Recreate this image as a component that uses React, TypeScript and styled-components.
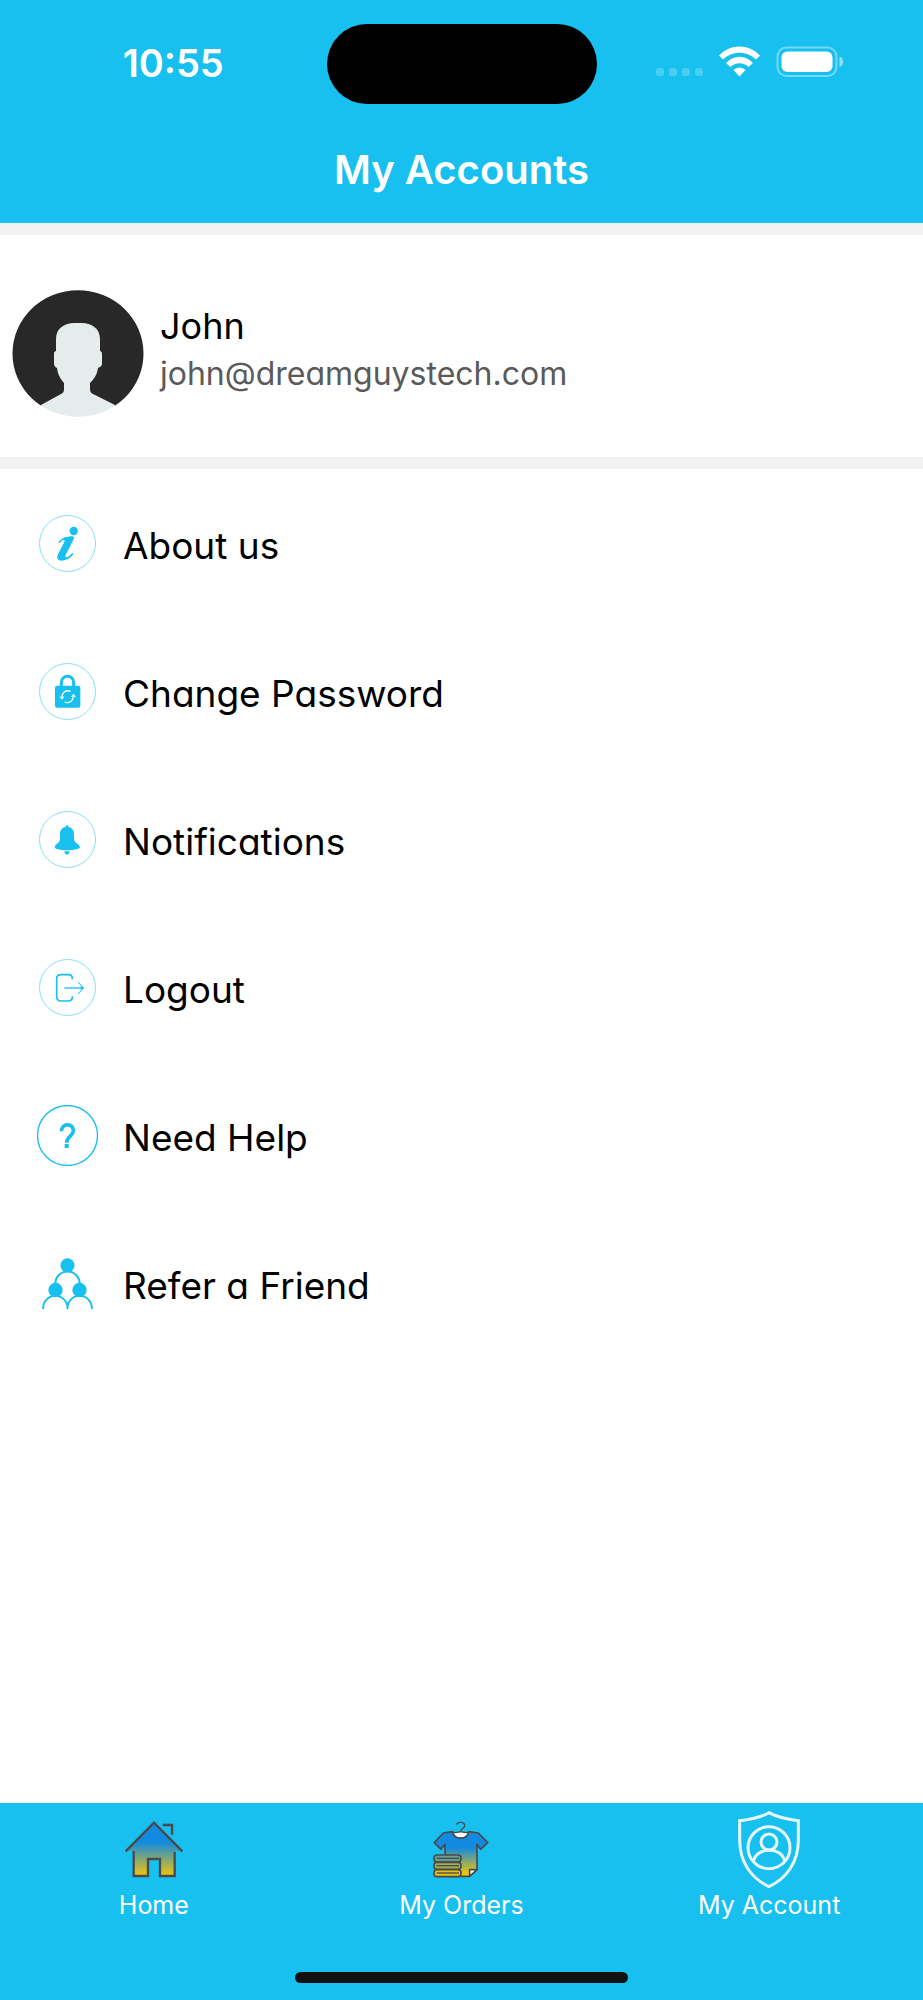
import React from "react";
import styled, { createGlobalStyle } from "styled-components";

const BLUE = "#17c0ee";
const INK = "#4a4a4a";

const GlobalStyle = createGlobalStyle`
  * { box-sizing: border-box; }
  body { margin: 0; background: #ffffff; }
`;

const Page = styled.div`
  display: flex;
  flex-direction: column;
  min-height: 100vh;
  font-family: Inter, "Liberation Sans", sans-serif;
  color: #000000;
`;

const Header = styled.header`
  padding: 24px 0 28px;
  background: ${BLUE};
  color: #ffffff;
`;

const StatusBar = styled.div`
  display: grid;
  grid-template-columns: 1fr 270px 1fr;
  align-items: center;
`;

const Clock = styled.time`
  padding: 0 0 2px 20px;
  text-align: center;
  font-size: 38px;
  line-height: 48px;
  font-weight: 600;
`;

const Island = styled.div`
  height: 80px;
  border-radius: 40px;
  background: #000000;
`;

const StatusIcons = styled.div`
  display: flex;
  justify-content: center;
  padding: 0 18px 4px 0;
`;

const Title = styled.h1`
  margin: 41px 0 0;
  text-align: center;
  font-size: 40px;
  line-height: 50px;
  font-weight: 600;
`;

const Profile = styled.section`
  display: flex;
  gap: 16px;
  padding: 55px 12px 40px;
  border: solid #f2f2f2;
  border-width: 12px 0;
  font-feature-settings: "cv11";
`;

const ProfileText = styled.div`
  padding-top: 12px;
`;

const Name = styled.h2`
  margin: 0;
  font-size: 36px;
  line-height: 48px;
  font-weight: 400;
`;

const Email = styled.p`
  margin: 0;
  font-size: 32px;
  line-height: 48px;
  color: #5a5a5a;
`;

const Menu = styled.ul`
  flex: 1;
  margin: 0;
  padding: 0;
  list-style: none;
`;

const MenuButton = styled.button`
  display: flex;
  align-items: center;
  gap: 20px;
  width: 100%;
  height: 148px;
  padding: 0 32px;
  border: 0;
  background: none;
  color: inherit;
  font-family: inherit;
  font-size: 37px;
  line-height: 48px;
  font-feature-settings: "cv11";
  text-align: left;
  cursor: pointer;
`;

const IconSlot = styled.span`
  display: flex;
  align-items: center;
  justify-content: center;
  width: 71px;
  height: 72px;
`;

const MenuLabel = styled.span`
  padding-top: 6px;
`;

const TabBar = styled.nav`
  background: ${BLUE};
  padding: 8px 0 17px;
`;

const Tabs = styled.div`
  display: grid;
  grid-template-columns: repeat(3, 1fr);
`;

const Tab = styled.a`
  display: flex;
  flex-direction: column;
  align-items: center;
  gap: 3px;
  color: #ffffff;
  text-decoration: none;
  font-size: 25px;
  line-height: 30px;
  font-weight: 400;
`;

const TabIcon = styled.span`
  display: flex;
  align-items: center;
  justify-content: center;
  height: 76px;
`;

const HomeIndicator = styled.div`
  width: 36%;
  height: 11px;
  margin: 52px auto 0;
  border-radius: 6px;
  background: #111111;
`;

const StatusGlyphs = () => (
  <svg width="190" height="32" viewBox="0 0 190 32" fill="#ffffff" aria-hidden="true">
    <g opacity="0.22">
      {[0, 13, 26, 39].map((x) => (
        <rect key={x} x={x} y="22" width="8" height="8" rx="2.5" />
      ))}
    </g>
    <path d="M63 9.5 C74.500 -2.500 92.500 -2.500 104 9.500 L100 13.500 C91 4.500 76 4.500 67 13.500 Z" />
    <path d="M70 17 C78 8.500 89 8.500 97 17 L92.500 21 C87.500 16 79.500 16 74.500 21 Z" />
    <path d="M77.500 24 C81 20.500 86 20.500 89.500 24 L83.500 30.500 Z" />
    <rect x="121.500" y="1.500" width="59" height="28.500" rx="9" fill="none" stroke="#ffffff" strokeOpacity="0.4" strokeWidth="2" />
    <rect x="125.500" y="5.500" width="51" height="20.500" rx="6" />
    <path d="M183.500 10.500 C188.500 12 188.500 19.500 183.500 21 Z" opacity="0.5" />
  </svg>
);

const Avatar = () => (
  <svg width="132" height="127" viewBox="0 0 132 127" role="img" aria-label="Profile photo">
    <defs>
      <clipPath id="avatar">
        <ellipse cx="66" cy="63.500" rx="65.500" ry="63.300" />
      </clipPath>
    </defs>
    <g clipPath="url(#avatar)">
      <path fill="#282828" d="M0 0 H132 V116 H0 Z" />
      <path
        fill="#e6ecec"
        d="M44 61 V49 C44 38 53 33 62 33 H70 C79 33 88 38 88 49 V61 C90 62 90 62 90 65 V74 C90 76 88 77 86 78 C85 85 82 89 78 93 V99 C78 102 79 103 81 104 L104 115.500 V127 H28 V115.500 L49 104 C51 103 52 102 52 99 V93 C48 88 46 85 45 78 C43 77 42 76 42 73 V65 C42 62 42 62 44 61 Z"
      />
    </g>
  </svg>
);

const Ring = ({ cy }: { cy: number }) => (
  <circle cx="142.500" cy={cy} r="84" fill="none" stroke="#8adff7" strokeWidth="3" />
);

const InfoIcon = () => (
  <svg width="57" height="57" viewBox="57 75 171 171" fill={BLUE} aria-hidden="true">
    <Ring cy={160.5} />
    <circle cx="161" cy="123" r="12.500" />
    <path d="M115 158 C123 145 137 139 159 139 C163 141 162 146 160 150 L137 195 C135 201 138 203 142 201 C149 198 153 193 157 189 C160 189 160 192 158 195 C149 206 136 212 122 212 C111 211 110 203 114 193 L133 156 C135 149 132 148 127 151 C123 154 121 158 118 160 Z" />
  </svg>
);

const LockIcon = () => (
  <svg width="57" height="57" viewBox="57 519 171 171" fill={BLUE} aria-hidden="true">
    <Ring cy={604.5} />
    <path d="M124 592 V577 a18.500 18.500 0 0 1 37 0 V592" fill="none" stroke={BLUE} strokeWidth="9" />
    <rect x="105" y="587" width="76" height="66" rx="6" />
    <path d="M126 621 C126 608 138 598 152 604 M160 619 C160 632 148 642 134 636" fill="none" stroke="#ffffff" strokeWidth="4" />
    <path d="M118 620 H133 L126 629 Z M153 620 H168 L160 611 Z" fill="#ffffff" />
  </svg>
);

const BellIcon = () => (
  <svg width="57" height="57" viewBox="57 62 171 171" fill={BLUE} aria-hidden="true">
    <Ring cy={147.5} />
    <path d="M137 110 V108 C137 104 145 104 145 108 V110 C156 112 162 120 162 131 V146 C162 156 173 159 179 167 C181 171 179 174 175 175 C153 181 130 181 109 175 C104 174 103 171 105 167 C110 159 120 156 120 146 V131 C120 120 126 112 137 110 Z" />
    <path d="M133 183 H149 C148 189 146 193 141 193 C136 193 134 189 133 183 Z" />
  </svg>
);

const LogoutIcon = () => (
  <svg width="57" height="57" viewBox="57 506 171 171" fill="none" stroke={BLUE} strokeWidth="4" aria-hidden="true">
    <Ring cy={591.5} />
    <path d="M157 567 V565 C157 557 153 553 145 553 H124 C115 553 110 557 110 565 V620 C110 628 115 632 124 632 H145 C153 632 157 628 157 620 V618" strokeWidth="5" />
    <path d="M133 593 H190" />
    <path d="M174 575 L190 593 L174 611" strokeWidth="3" />
    <path d="M182 587 L192 593 L182 599 Z" fill={BLUE} stroke="none" />
  </svg>
);

const HelpIcon = () => (
  <svg width="61" height="61" viewBox="54 45 183 183" fill="none" stroke={BLUE} aria-hidden="true">
    <circle cx="145.500" cy="136.500" r="90" strokeWidth="4" />
    <path d="M127.500 124 C127 99 163 98 163 122 C163 138 143 139 143 158" strokeWidth="11" />
    <rect x="137" y="162" width="12" height="12" fill={BLUE} stroke="none" />
  </svg>
);

const ReferIcon = () => (
  <svg width="51" height="51" viewBox="68 501 152 153" fill={BLUE} aria-hidden="true">
    <g fill="none" stroke={BLUE} strokeWidth="6">
      <path d="M107.500 578 A36.500 36.500 0 0 1 180.500 578" />
      <path d="M71 654 V651 A36.500 36.500 0 0 1 144 651 V654 M144 654 V651 A36.500 36.500 0 0 1 217 651 V654" />
    </g>
    <circle cx="144" cy="523" r="21" />
    <circle cx="108" cy="597" r="21.500" />
    <circle cx="180" cy="597" r="21.500" />
  </svg>
);

const Fade = ({ id, from, to }: { id: string; from: number; to: number }) => (
  <linearGradient id={id} gradientUnits="userSpaceOnUse" x1="0" x2="0" y1={from} y2={to}>
    <stop offset="0" stopColor="#118adf" />
    <stop offset="1" stopColor="#efc50c" />
  </linearGradient>
);

const HomeIcon = () => (
  <svg width="58" height="57" viewBox="75 92 174 171" fill="none" stroke={INK} strokeWidth="7" aria-hidden="true">
    <defs><Fade id="house" from={155} to={255} /></defs>
    <path d="M162 97 L245 182 H224 V257 H180 V206 H144 V257 H102 V182 H78 Z" fill="url(#house)" stroke="none" />
    <path d="M77 183 L162 97 L247 183" />
    <path d="M101 182 V257 H144 V206 H180 V257 H224 V184" />
    <path d="M188 104 H216 V133" />
  </svg>
);

const OrdersIcon = () => (
  <svg width="56" height="57" viewBox="159 92 168 171" fill="none" stroke={INK} strokeWidth="5" strokeLinejoin="round" aria-hidden="true">
    <defs><Fade id="shirt" from={172} to={250} /></defs>
    <path d="M217 124 L190 128 L163 157 L183 177 L195 162 V258 H268 L291 238 V162 L302 177 L323 157 L295 128 L267 124 C262 150 222 150 217 124 Z" fill="url(#shirt)" />
    <path d="M218 125 C226 129 232 126 242 124 C252 126 258 129 266 125 C261 149 223 149 218 125 Z" fill="#ffffff" strokeWidth="4" />
    <path d="M230 103 C232 93 254 94 254 106 C254 114 242 114 242 124" strokeWidth="4" />
    <path d="M269 258 V238 H291 Z" fill="#ffffff" />
    {[194, 216, 238].map((y, i) => (
      <g key={y}>
        <rect x="162" y={y} width="81" height="21" rx="9" fill={["#6a9e91", "#a5ae52", "#e6c10f"][i]} />
        <path d={`M170 ${y + 10} H237`} strokeWidth="4" />
      </g>
    ))}
  </svg>
);

const AccountIcon = () => (
  <svg width="62" height="77" viewBox="174 62 186 231" fill="none" stroke="#e6f8fe" strokeWidth="9" aria-hidden="true">
    <path d="M267 67 C290 80 330 88 355 91 V150 C355 215 320 264 267 289 C214 264 179 215 179 150 V91 C205 88 245 80 267 67 Z" />
    <circle cx="267" cy="172" r="63" />
    <circle cx="267" cy="155" r="24" />
    <path d="M220 211 C228 190 246 180 267 180 C288 180 307 190 315 211" />
  </svg>
);

const menuItems = [
  { label: "About us", Icon: InfoIcon },
  { label: "Change Password", Icon: LockIcon },
  { label: "Notifications", Icon: BellIcon },
  { label: "Logout", Icon: LogoutIcon },
  { label: "Need Help", Icon: HelpIcon },
  { label: "Refer a Friend", Icon: ReferIcon },
];

const tabs = [
  { label: "Home", href: "#home", Icon: HomeIcon },
  { label: "My Orders", href: "#orders", Icon: OrdersIcon },
  { label: "My Account", href: "#account", Icon: AccountIcon },
];

export default function App() {
  return (
    <Page>
      <GlobalStyle />
      <Header>
        <StatusBar>
          <Clock>10:55</Clock>
          <Island />
          <StatusIcons><StatusGlyphs /></StatusIcons>
        </StatusBar>
        <Title>My Accounts</Title>
      </Header>
      <Profile>
        <Avatar />
        <ProfileText>
          <Name>John</Name>
          <Email>john@dreamguystech.com</Email>
        </ProfileText>
      </Profile>
      <Menu>
        {menuItems.map(({ label, Icon }) => (
          <li key={label}>
            <MenuButton type="button">
              <IconSlot><Icon /></IconSlot>
              <MenuLabel>{label}</MenuLabel>
            </MenuButton>
          </li>
        ))}
      </Menu>
      <TabBar>
        <Tabs>
          {tabs.map(({ label, href, Icon }) => (
            <Tab key={label} href={href}>
              <TabIcon><Icon /></TabIcon>
              {label}
            </Tab>
          ))}
        </Tabs>
        <HomeIndicator />
      </TabBar>
    </Page>
  );
}
